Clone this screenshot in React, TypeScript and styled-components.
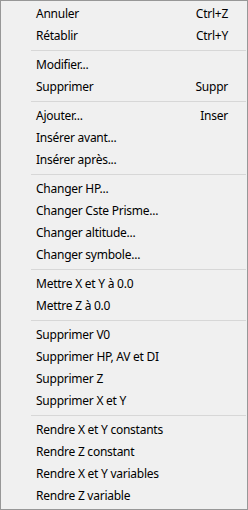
import React from "react";
import styled, { createGlobalStyle } from "styled-components";

const GlobalStyle = createGlobalStyle`
  html, body {
    margin: 0;
    padding: 0;
    background: #f0f0f0;
  }
`;

const Menu = styled.div`
  box-sizing: border-box;
  width: 248px;
  height: 510px;
  border: 1px solid #979797;
  background: #f0f0f0;
  padding: 2px 0;
  font-family: "Noto Sans", "Open Sans", sans-serif;
  font-size: 12px;
  letter-spacing: -0.25px;
  color: #000;
  display: flex;
  flex-direction: column;
`;

const Item = styled.div`
  height: 22px;
  display: flex;
  align-items: center;
  justify-content: space-between;
  padding: 0 19px 1px 35px;
  box-sizing: border-box;
  white-space: nowrap;
`;

const Shortcut = styled.span`
  text-align: right;
`;

const Separator = styled.div`
  height: 1px;
  margin: 3px 1px 3px 30px;
  background: #d7d7d7;
`;

type Entry = { label: string; key?: string } | "sep";

const entries: Entry[] = [
  { label: "Annuler", key: "Ctrl+Z" },
  { label: "Rétablir", key: "Ctrl+Y" },
  "sep",
  { label: "Modifier..." },
  { label: "Supprimer", key: "Suppr" },
  "sep",
  { label: "Ajouter...", key: "Inser" },
  { label: "Insérer avant..." },
  { label: "Insérer après..." },
  "sep",
  { label: "Changer HP..." },
  { label: "Changer Cste Prisme..." },
  { label: "Changer altitude..." },
  { label: "Changer symbole..." },
  "sep",
  { label: "Mettre X et Y à 0.0" },
  { label: "Mettre Z à 0.0" },
  "sep",
  { label: "Supprimer V0" },
  { label: "Supprimer HP, AV et DI" },
  { label: "Supprimer Z" },
  { label: "Supprimer X et Y" },
  "sep",
  { label: "Rendre X et Y constants" },
  { label: "Rendre Z constant" },
  { label: "Rendre X et Y variables" },
  { label: "Rendre Z variable" },
];

export default function App() {
  return (
    <>
      <GlobalStyle />
      <Menu>
        {entries.map((e, i) =>
          e === "sep" ? (
            <Separator key={i} />
          ) : (
            <Item key={i}>
              <span>{e.label}</span>
              {e.key && <Shortcut>{e.key}</Shortcut>}
            </Item>
          )
        )}
      </Menu>
    </>
  );
}
